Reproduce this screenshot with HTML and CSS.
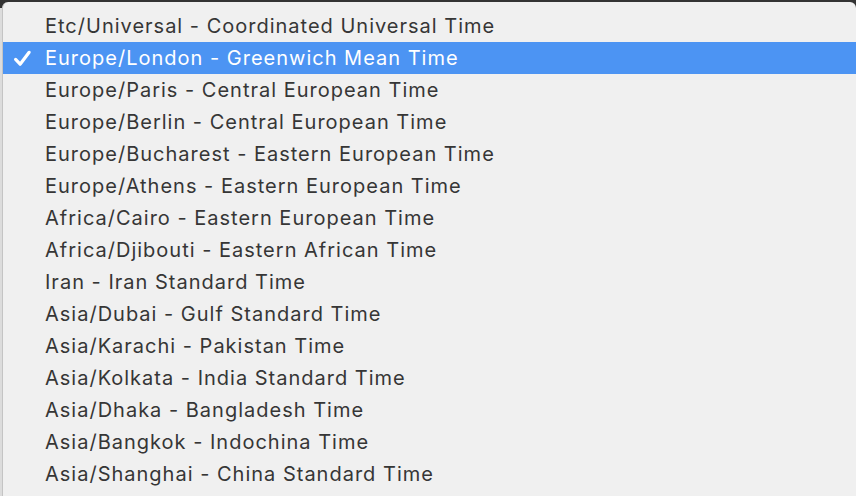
FILE: index.html
```html
<!DOCTYPE html>
<html lang="en">
<head>
  <meta charset="UTF-8" />
  <title>Time zone</title>
  <link rel="stylesheet" href="styles.css">
</head>
<body>
  <div class="menu">
    <ul class="options">
      <li>Etc/Universal - Coordinated Universal Time</li>
      <li class="selected">
        <svg class="check" viewBox="0 0 16 16"><path d="M2.2 8.8 L6 12.8 L13.6 2.8" /></svg>
        Europe/London - Greenwich Mean Time
      </li>
      <li>Europe/Paris - Central European Time</li>
      <li>Europe/Berlin - Central European Time</li>
      <li>Europe/Bucharest - Eastern European Time</li>
      <li>Europe/Athens - Eastern European Time</li>
      <li>Africa/Cairo - Eastern European Time</li>
      <li>Africa/Djibouti - Eastern African Time</li>
      <li>Iran - Iran Standard Time</li>
      <li>Asia/Dubai - Gulf Standard Time</li>
      <li>Asia/Karachi - Pakistan Time</li>
      <li>Asia/Kolkata - India Standard Time</li>
      <li>Asia/Dhaka - Bangladesh Time</li>
      <li>Asia/Bangkok - Indochina Time</li>
      <li>Asia/Shanghai - China Standard Time</li>
    </ul>
  </div>
</body>
</html>
```

FILE: styles.css
```css
html, body {
  margin: 0;
  height: 100%;
}
body {
  background: linear-gradient(#333 0, #333 8px, #dcdcdc 8px);
  font-family: Inter, "Noto Sans", sans-serif;
  overflow: hidden;
  padding-top: 2px;
  padding-left: 2px;
  box-sizing: border-box;
}
.menu {
  background: #f0f0f0;
  border-radius: 6px 6px 0 0;
  border-left: 1px solid #c4c4c4;
  height: 100%;
  box-sizing: border-box;
  padding-top: 8px;
}
.options {
  list-style: none;
  margin: 0;
  padding: 0;
}
.options li {
  position: relative;
  height: 32px;
  line-height: 33px;
  padding-left: 42px;
  font-size: 20px;
  letter-spacing: 1px;
  color: #363636;
  white-space: nowrap;
}
.options li.selected {
  background: #4c94f3;
  color: white;
}
.check {
  position: absolute;
  left: 10px;
  top: 7px;
  width: 19px;
  height: 19px;
  fill: none;
  stroke: white;
  stroke-width: 2.7;
  stroke-linecap: round;
  stroke-linejoin: round;
}
```
